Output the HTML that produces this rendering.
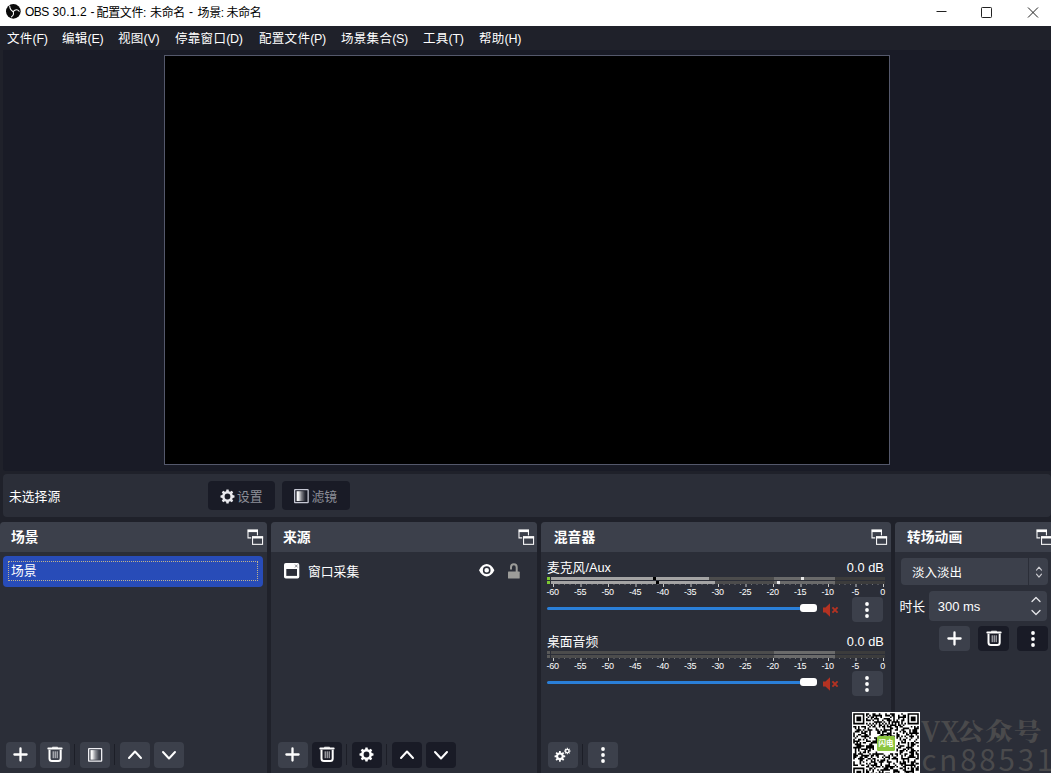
<!DOCTYPE html>
<html lang="zh-CN">
<head>
<meta charset="utf-8">
<title>OBS 30.1.2 - 配置文件: 未命名 - 场景: 未命名</title>
<style>
*{box-sizing:border-box;margin:0;padding:0}
html,body{width:1051px;height:773px;overflow:hidden;background:#1f212a}
body{position:relative;font-family:"Liberation Sans","Noto Sans CJK SC",sans-serif;font-size:12px;color:#fefefe;-webkit-font-smoothing:antialiased}
.abs{position:absolute}
#titlebar{left:0;top:0;width:1051px;height:26px;background:#fff;color:#000}
#titlebar .ttl{top:3.5px;font-size:12px;line-height:18px;white-space:nowrap;letter-spacing:-0.35px}
#menubar{left:0;top:26px;width:1051px;height:24px;background:#1f212a}
#menubar span{position:absolute;top:4px;line-height:18px;font-size:12.5px;white-space:nowrap;letter-spacing:0.3px}
#menubar i{font-style:normal;letter-spacing:-0.3px}
#pvarea{left:3px;top:50px;width:1060px;height:421px;background:#191b26;border-radius:0 0 0 3px}
#preview{left:164px;top:55px;width:726px;height:410px;background:#000;border:1px solid #54586b}
#ctx{left:3px;top:474px;width:1048px;height:43px;background:#2b2e38;border-radius:4px}
.dock{background:#2b2e38;border-radius:4px 4px 0 0;top:522px;height:260px}
.dock .hd{position:absolute;left:0;top:0;right:0;height:30px;background:#3c404b;border-radius:4px 4px 0 0}
.dock .hd b{position:absolute;left:11px;top:6.700px;font-size:13.800px;line-height:18px;font-weight:700;white-space:nowrap}
.btn{position:absolute;background:#3c404b;border-radius:4px}
.btn.dk{background:#191b26}
.dim{color:#8d8f98;font-size:12.800px;line-height:18px;white-space:nowrap}
.tk{position:absolute;font-size:9px;line-height:10px;color:#fefefe;white-space:nowrap;letter-spacing:-0.2px}
svg{position:absolute;display:block;overflow:visible}
</style>
</head>
<body>

<!-- window title bar -->
<div id="titlebar" class="abs">
  <svg style="left:6.300px;top:3.900px" width="14.700" height="14.700" viewBox="0 0 30 30">
    <circle cx="15" cy="15" r="15" fill="#0a0a0a"/>
    <g fill="none" stroke="#fff" stroke-width="2.100" stroke-linecap="round">
      <path d="M7.600 4.300c0.300 5.500 2.300 8.800 7 11.100"/>
      <path d="M14.600 15.400c4.400-4.800 9.300-5 12.200-0.500"/>
      <path d="M14.600 15.400c1.800 5 0.300 8.600-3.600 11"/>
    </g>
  </svg>
  <span class="abs ttl" style="left:25px;top:2.500px;letter-spacing:0.200px"><span style="letter-spacing:-0.500px">OBS</span> 30.1.2 -</span><span class="abs ttl" style="left:96.500px">配置文件:</span><span class="abs ttl" style="left:150px">未命名</span><span class="abs ttl" style="left:189px;top:2.500px">-</span><span class="abs ttl" style="left:197.500px">场景:</span><span class="abs ttl" style="left:226.500px">未命名</span>
  <svg style="left:936px;top:6px" width="110" height="12" viewBox="0 0 110 12" fill="none" stroke="#222" stroke-width="1">
    <path d="M0.500 5.500H10.500"/>
    <rect x="45.500" y="1.500" width="10" height="10" rx="0.800"/>
    <path d="M92 1.500l10 10M102 1.500l-10 10"/>
  </svg>
</div>

<!-- menu bar -->
<div id="menubar" class="abs">
  <span style="left:7px">文件<i>(F)</i></span>
  <span style="left:62px">编辑<i>(E)</i></span>
  <span style="left:118px">视图<i>(V)</i></span>
  <span style="left:175px">停靠窗口<i>(D)</i></span>
  <span style="left:259px">配置文件<i>(P)</i></span>
  <span style="left:341px">场景集合<i>(S)</i></span>
  <span style="left:423px">工具<i>(T)</i></span>
  <span style="left:479px">帮助<i>(H)</i></span>
</div>

<!-- preview -->
<div id="pvarea" class="abs"></div>
<div id="preview" class="abs"></div>

<!-- context bar -->
<div id="ctx" class="abs">
  <span class="abs" style="left:6px;top:14px;line-height:18px;font-size:12.800px;white-space:nowrap">未选择源</span>
  <div class="btn dk" style="left:205px;top:7px;width:67px;height:29px">
    <svg style="left:11.600px;top:7.600px" width="15" height="15" viewBox="0 0 15 15"><path fill="#e9e9ee" fill-rule="evenodd" d="M6.10 2.28L6.39 0.49L8.61 0.49L8.90 2.28L10.20 2.82L11.67 1.76L13.24 3.33L12.18 4.80L12.72 6.10L14.51 6.39L14.51 8.61L12.72 8.90L12.18 10.20L13.24 11.67L11.67 13.24L10.20 12.18L8.90 12.72L8.61 14.51L6.39 14.51L6.10 12.72L4.80 12.18L3.33 13.24L1.76 11.67L2.82 10.20L2.28 8.90L0.49 8.61L0.49 6.39L2.28 6.10L2.82 4.80L1.76 3.33L3.33 1.76L4.80 2.82zM4.60 7.50a2.90 2.90 0 1 0 5.80 0a2.90 2.90 0 1 0 -5.80 0z"/></svg>
    <span class="abs dim" style="left:29px;top:7px">设置</span>
  </div>
  <div class="btn dk" style="left:279px;top:7px;width:68px;height:29px">
    <svg style="left:12.200px;top:7.900px" width="14.800" height="14.300" viewBox="0 0 14.800 14.300"><defs><linearGradient id="fg1" x1="0" x2="1" y1="0" y2="0"><stop offset="0" stop-color="#fff"/><stop offset="0.180" stop-color="#fff" stop-opacity="0.950"/><stop offset="0.500" stop-color="#fff" stop-opacity="0.450"/><stop offset="0.850" stop-color="#fff" stop-opacity="0.080"/><stop offset="1" stop-color="#fff" stop-opacity="0"/></linearGradient></defs><rect x="0.650" y="0.650" width="13.500" height="13" rx="0.500" fill="none" stroke="#c6c8d4" stroke-width="1.300"/><rect x="2.600" y="2.200" width="9.700" height="9.900" fill="url(#fg1)"/></svg>
    <span class="abs dim" style="left:29.500px;top:7px">滤镜</span>
  </div>
</div>

<!-- docks -->
<div class="dock abs" id="d-scenes" style="left:0;width:267px"><div class="hd"><b>场景</b><svg style="left:247px;top:7px" width="17" height="17" viewBox="0 0 17 17" fill="none" stroke="#f4f4f6" stroke-width="1.100"><rect x="0.400" y="0.400" width="10.600" height="2.700" fill="#fefefe" stroke="none"/><path d="M1 3v5.900h4M10.450 3v4"/><rect x="4.200" y="6.400" width="12.700" height="10.300" fill="#3c404b" stroke="none"/><rect x="5.550" y="8" width="10" height="7.350" fill="none"/><rect x="5" y="7.200" width="11.100" height="2.300" fill="#fefefe" stroke="none"/></svg></div>
  <div class="abs" style="left:3px;top:33.500px;width:260px;height:31.500px;background:#284cb8;border-radius:4px">
    <div class="abs" style="left:5px;top:5.500px;width:250px;height:20px;border:1px dotted rgba(232,205,130,0.800)"></div>
    <span class="abs" style="left:8px;top:6.800px;line-height:18px;font-size:12.800px">场景</span>
  </div>
  <div class="btn" style="left:6px;top:220px;width:30px;height:26px"><svg style="left:6.7px;top:5.300px" width="15" height="15" viewBox="0 0 15 15" stroke="#fefefe" stroke-width="2.300" stroke-linecap="round"><path d="M7.500 1.400v12.200M1.400 7.500h12.200"/></svg></div><div class="btn" style="left:40px;top:220px;width:30px;height:26px"><svg style="left:7.3px;top:4.200px" width="16" height="17" viewBox="0 0 16 17" fill="none" stroke="#fefefe"><path d="M1.300 2.450h13.400" stroke-width="1.900" stroke-linecap="round"/><path d="M5 1.700c0-0.700 0.300-1 1-1h4c0.700 0 1 0.300 1 1z" fill="#fefefe" stroke="none"/><path d="M2.500 3.800v8.800c0 1.600 0.900 2.500 2.500 2.500h6.200c1.600 0 2.500-0.900 2.500-2.500V3.800" stroke-width="2"/><path d="M6.200 5.300v6.900M8.200 5.300v6.900M10.200 5.300v6.900" stroke-width="0.900" stroke="#e2e2e6"/></svg></div><div class="abs" style="left:74px;top:222px;width:1px;height:21px;background:#1c1e27"></div><div class="btn" style="left:80px;top:220px;width:30px;height:26px"><svg style="left:7.700px;top:5.800px" width="14.300" height="13.800" viewBox="0 0 14.300 13.800"><defs><linearGradient id="fg2" x1="0" x2="1" y1="0" y2="0"><stop offset="0" stop-color="#fff"/><stop offset="0.180" stop-color="#fff" stop-opacity="0.950"/><stop offset="0.500" stop-color="#fff" stop-opacity="0.450"/><stop offset="0.850" stop-color="#fff" stop-opacity="0.080"/><stop offset="1" stop-color="#fff" stop-opacity="0"/></linearGradient></defs><rect x="0.650" y="0.650" width="13" height="12.500" rx="0.500" fill="none" stroke="#eeeef2" stroke-width="1.300"/><rect x="2.500" y="2.100" width="9.300" height="9.600" fill="url(#fg2)"/></svg></div><div class="abs" style="left:114px;top:222px;width:1px;height:21px;background:#1c1e27"></div><div class="btn" style="left:120px;top:220px;width:30px;height:26px"><svg style="left:8.100px;top:8.300px" width="14" height="9" viewBox="0 0 14 9" fill="none" stroke="#fefefe" stroke-width="2" stroke-linecap="round" stroke-linejoin="round"><path d="M1 8l6-6.500L13 8"/></svg></div><div class="btn" style="left:154px;top:220px;width:30px;height:26px"><svg style="left:8.100px;top:8.700px" width="14" height="9" viewBox="0 0 14 9" fill="none" stroke="#fefefe" stroke-width="2" stroke-linecap="round" stroke-linejoin="round"><path d="M1 1l6 6.500L13 1"/></svg></div></div>
<div class="dock abs" id="d-sources" style="left:271px;width:266px"><div class="hd"><b style="left:12px">来源</b><svg style="left:246.500px;top:7px" width="17" height="17" viewBox="0 0 17 17" fill="none" stroke="#f4f4f6" stroke-width="1.100"><rect x="0.400" y="0.400" width="10.600" height="2.700" fill="#fefefe" stroke="none"/><path d="M1 3v5.900h4M10.450 3v4"/><rect x="4.200" y="6.400" width="12.700" height="10.300" fill="#3c404b" stroke="none"/><rect x="5.550" y="8" width="10" height="7.350" fill="none"/><rect x="5" y="7.200" width="11.100" height="2.300" fill="#fefefe" stroke="none"/></svg></div>
  <svg style="left:13px;top:40.800px" width="15.300" height="15.500" viewBox="0 0 15.300 15.500"><rect x="0" y="0" width="15.300" height="15.500" rx="1.800" fill="#fefefe"/><rect x="2.300" y="6" width="10.700" height="6.900" fill="#2b2e38"/><path d="M11 1.600l2.600 2.800M13.600 1.600l-2.600 2.800" stroke="#6a6c74" stroke-width="0.800" fill="none"/></svg>
  <span class="abs" style="left:37px;top:40.500px;line-height:18px;font-size:12.800px;white-space:nowrap">窗口采集</span>
  <svg style="left:207.600px;top:42.400px" width="15.400" height="12.400" viewBox="0 0 15.400 12.400"><path fill="#fefefe" fill-rule="evenodd" d="M0 6.200C2 2.200 4.800 0 7.700 0S13.400 2.200 15.400 6.200C13.400 10.200 10.600 12.400 7.700 12.400S2 10.200 0 6.200zM3.850 6.200a3.850 3.850 0 1 0 7.700 0a3.850 3.850 0 1 0 -7.700 0zM5.400 6.200a2.300 2.300 0 1 0 4.600 0a2.300 2.300 0 1 0 -4.600 0z"/></svg>
  <svg style="left:237px;top:40.500px" width="12" height="16" viewBox="0 0 12 16"><path fill="none" stroke="#9c9c99" stroke-width="2" d="M3 6.400V4.150a2.850 2.850 0 0 1 5.700 0V9"/><rect x="0" y="8.600" width="11.700" height="7" rx="0.600" fill="#9c9c99"/></svg>
  <div class="btn" style="left:7px;top:220px;width:30px;height:26px"><svg style="left:6.7px;top:5.300px" width="15" height="15" viewBox="0 0 15 15" stroke="#fefefe" stroke-width="2.300" stroke-linecap="round"><path d="M7.500 1.400v12.200M1.400 7.500h12.200"/></svg></div><div class="btn dk" style="left:41px;top:220px;width:30px;height:26px"><svg style="left:7.3px;top:4.200px" width="16" height="17" viewBox="0 0 16 17" fill="none" stroke="#fefefe"><path d="M1.300 2.450h13.400" stroke-width="1.900" stroke-linecap="round"/><path d="M5 1.700c0-0.700 0.300-1 1-1h4c0.700 0 1 0.300 1 1z" fill="#fefefe" stroke="none"/><path d="M2.500 3.800v8.800c0 1.600 0.900 2.500 2.500 2.500h6.200c1.600 0 2.500-0.900 2.500-2.500V3.800" stroke-width="2"/><path d="M6.200 5.300v6.900M8.200 5.300v6.900M10.200 5.300v6.900" stroke-width="0.900" stroke="#e2e2e6"/></svg></div><div class="abs" style="left:75px;top:222px;width:1px;height:21px;background:#1c1e27"></div><div class="btn dk" style="left:81px;top:220px;width:30px;height:26px"><svg style="left:7.400px;top:5.200px" width="15" height="15" viewBox="0 0 15 15"><path fill="#fefefe" fill-rule="evenodd" d="M6.10 2.28L6.39 0.49L8.61 0.49L8.90 2.28L10.20 2.82L11.67 1.76L13.24 3.33L12.18 4.80L12.72 6.10L14.51 6.39L14.51 8.61L12.72 8.90L12.18 10.20L13.24 11.67L11.67 13.24L10.20 12.18L8.90 12.72L8.61 14.51L6.39 14.51L6.10 12.72L4.80 12.18L3.33 13.24L1.76 11.67L2.82 10.20L2.28 8.90L0.49 8.61L0.49 6.39L2.28 6.10L2.82 4.80L1.76 3.33L3.33 1.76L4.80 2.82zM4.60 7.50a2.90 2.90 0 1 0 5.80 0a2.90 2.90 0 1 0 -5.80 0z"/></svg></div><div class="abs" style="left:115px;top:222px;width:1px;height:21px;background:#1c1e27"></div><div class="btn dk" style="left:121px;top:220px;width:30px;height:26px"><svg style="left:8.100px;top:8.300px" width="14" height="9" viewBox="0 0 14 9" fill="none" stroke="#fefefe" stroke-width="2" stroke-linecap="round" stroke-linejoin="round"><path d="M1 8l6-6.500L13 8"/></svg></div><div class="btn dk" style="left:155px;top:220px;width:30px;height:26px"><svg style="left:8.100px;top:8.700px" width="14" height="9" viewBox="0 0 14 9" fill="none" stroke="#fefefe" stroke-width="2" stroke-linecap="round" stroke-linejoin="round"><path d="M1 1l6 6.500L13 1"/></svg></div></div>
<div class="dock abs" id="d-mixer" style="left:541px;width:350px"><div class="hd"><b style="left:12.800px">混音器</b><svg style="left:330px;top:7px" width="17" height="17" viewBox="0 0 17 17" fill="none" stroke="#f4f4f6" stroke-width="1.100"><rect x="0.400" y="0.400" width="10.600" height="2.700" fill="#fefefe" stroke="none"/><path d="M1 3v5.900h4M10.450 3v4"/><rect x="4.200" y="6.400" width="12.700" height="10.300" fill="#3c404b" stroke="none"/><rect x="5.550" y="8" width="10" height="7.350" fill="none"/><rect x="5" y="7.200" width="11.100" height="2.300" fill="#fefefe" stroke="none"/></svg></div><span class="abs" style="left:6px;top:36.800px;line-height:18px;font-size:12.800px;white-space:nowrap">麦克风/Aux</span><span class="abs" style="right:7.200px;top:36.800px;line-height:18px;font-size:12.800px;white-space:nowrap">0.0 dB</span><div class="abs" style="left:6px;top:55px;width:3px;height:3px;background:#7cc832"></div><div class="abs" style="left:6px;top:59px;width:3px;height:3px;background:#7cc832"></div><div class="abs" style="left:10px;top:55px;width:223px;height:3px;background:#4c4c4c"></div><div class="abs" style="left:233px;top:55px;width:61px;height:3px;background:#6a6a6a"></div><div class="abs" style="left:294px;top:55px;width:50px;height:3px;background:#3c3c3c"></div><div class="abs" style="left:10px;top:59px;width:223px;height:3px;background:#4c4c4c"></div><div class="abs" style="left:233px;top:59px;width:61px;height:3px;background:#6a6a6a"></div><div class="abs" style="left:294px;top:59px;width:50px;height:3px;background:#3c3c3c"></div><div class="abs" style="left:10px;top:55px;width:158px;height:3px;background:#a4a4a4"></div><div class="abs" style="left:10px;top:59px;width:164px;height:3px;background:#a4a4a4"></div><div class="abs" style="left:112px;top:55px;width:3px;height:3px;background:#000"></div><div class="abs" style="left:115px;top:59px;width:3px;height:3px;background:#000"></div><div class="abs" style="left:260px;top:55px;width:3px;height:3px;background:#e6e6e6"></div><div class="abs" style="left:236px;top:59px;width:3px;height:3px;background:#e6e6e6"></div><svg style="left:0;top:62px" width="350" height="4" viewBox="0 0 350 4" fill="#c8c8c8"><rect x="12.0" y="0" width="1" height="3"/><rect x="17.5" y="0" width="1" height="1" opacity="0.450"/><rect x="23.0" y="0" width="1" height="1" opacity="0.450"/><rect x="28.5" y="0" width="1" height="1" opacity="0.450"/><rect x="34.0" y="0" width="1" height="1" opacity="0.450"/><rect x="39.5" y="0" width="1" height="3"/><rect x="45.0" y="0" width="1" height="1" opacity="0.450"/><rect x="50.5" y="0" width="1" height="1" opacity="0.450"/><rect x="56.0" y="0" width="1" height="1" opacity="0.450"/><rect x="61.5" y="0" width="1" height="1" opacity="0.450"/><rect x="67.0" y="0" width="1" height="3"/><rect x="72.5" y="0" width="1" height="1" opacity="0.450"/><rect x="78.0" y="0" width="1" height="1" opacity="0.450"/><rect x="83.5" y="0" width="1" height="1" opacity="0.450"/><rect x="89.0" y="0" width="1" height="1" opacity="0.450"/><rect x="94.5" y="0" width="1" height="3"/><rect x="100.0" y="0" width="1" height="1" opacity="0.450"/><rect x="105.5" y="0" width="1" height="1" opacity="0.450"/><rect x="111.0" y="0" width="1" height="1" opacity="0.450"/><rect x="116.5" y="0" width="1" height="1" opacity="0.450"/><rect x="122.0" y="0" width="1" height="3"/><rect x="127.5" y="0" width="1" height="1" opacity="0.450"/><rect x="133.0" y="0" width="1" height="1" opacity="0.450"/><rect x="138.5" y="0" width="1" height="1" opacity="0.450"/><rect x="144.0" y="0" width="1" height="1" opacity="0.450"/><rect x="149.5" y="0" width="1" height="3"/><rect x="155.0" y="0" width="1" height="1" opacity="0.450"/><rect x="160.5" y="0" width="1" height="1" opacity="0.450"/><rect x="166.0" y="0" width="1" height="1" opacity="0.450"/><rect x="171.5" y="0" width="1" height="1" opacity="0.450"/><rect x="177.0" y="0" width="1" height="3"/><rect x="182.5" y="0" width="1" height="1" opacity="0.450"/><rect x="188.0" y="0" width="1" height="1" opacity="0.450"/><rect x="193.5" y="0" width="1" height="1" opacity="0.450"/><rect x="199.0" y="0" width="1" height="1" opacity="0.450"/><rect x="204.5" y="0" width="1" height="3"/><rect x="210.0" y="0" width="1" height="1" opacity="0.450"/><rect x="215.5" y="0" width="1" height="1" opacity="0.450"/><rect x="221.0" y="0" width="1" height="1" opacity="0.450"/><rect x="226.5" y="0" width="1" height="1" opacity="0.450"/><rect x="232.0" y="0" width="1" height="3"/><rect x="237.5" y="0" width="1" height="1" opacity="0.450"/><rect x="243.0" y="0" width="1" height="1" opacity="0.450"/><rect x="248.5" y="0" width="1" height="1" opacity="0.450"/><rect x="254.0" y="0" width="1" height="1" opacity="0.450"/><rect x="259.5" y="0" width="1" height="3"/><rect x="265.0" y="0" width="1" height="1" opacity="0.450"/><rect x="270.5" y="0" width="1" height="1" opacity="0.450"/><rect x="276.0" y="0" width="1" height="1" opacity="0.450"/><rect x="281.5" y="0" width="1" height="1" opacity="0.450"/><rect x="287.0" y="0" width="1" height="3"/><rect x="292.5" y="0" width="1" height="1" opacity="0.450"/><rect x="298.0" y="0" width="1" height="1" opacity="0.450"/><rect x="303.5" y="0" width="1" height="1" opacity="0.450"/><rect x="309.0" y="0" width="1" height="1" opacity="0.450"/><rect x="314.5" y="0" width="1" height="3"/><rect x="320.0" y="0" width="1" height="1" opacity="0.450"/><rect x="325.5" y="0" width="1" height="1" opacity="0.450"/><rect x="331.0" y="0" width="1" height="1" opacity="0.450"/><rect x="336.5" y="0" width="1" height="1" opacity="0.450"/><rect x="342.0" y="0" width="1" height="3"/></svg><span class="tk" style="left:-3.3px;top:64.800px;width:30px;text-align:center">-60</span><span class="tk" style="left:24.2px;top:64.800px;width:30px;text-align:center">-55</span><span class="tk" style="left:51.7px;top:64.800px;width:30px;text-align:center">-50</span><span class="tk" style="left:79.2px;top:64.800px;width:30px;text-align:center">-45</span><span class="tk" style="left:106.7px;top:64.800px;width:30px;text-align:center">-40</span><span class="tk" style="left:134.2px;top:64.800px;width:30px;text-align:center">-35</span><span class="tk" style="left:161.7px;top:64.800px;width:30px;text-align:center">-30</span><span class="tk" style="left:189.2px;top:64.800px;width:30px;text-align:center">-25</span><span class="tk" style="left:216.7px;top:64.800px;width:30px;text-align:center">-20</span><span class="tk" style="left:244.2px;top:64.800px;width:30px;text-align:center">-15</span><span class="tk" style="left:271.7px;top:64.800px;width:30px;text-align:center">-10</span><span class="tk" style="left:299.2px;top:64.800px;width:30px;text-align:center">-5</span><span class="tk" style="left:332.0px;top:64.800px;width:12px;text-align:right">0</span><div class="abs" style="left:6px;top:84.6px;width:262px;height:3.700px;border-radius:2px;background:#2a7fd8"></div><div class="abs" style="left:258.600px;top:82.1px;width:17.400px;height:8.400px;border-radius:3px;background:#fefefe"></div><svg style="left:282px;top:81px" width="16" height="14" viewBox="0 0 16 14"><path fill="#b43222" d="M0 4.500h2.500L7 0.300v13.400L2.500 9.500H0z"/><path d="M9.400 4.400l5.200 5.200M14.600 4.400l-5.200 5.200" stroke="#b43222" stroke-width="1.900" fill="none"/></svg><div class="btn" style="left:311px;top:75px;width:31px;height:25px"><svg style="left:13.300px;top:5px" width="4" height="16" viewBox="0 0 4 16" fill="#fefefe"><circle cx="2" cy="2" r="1.900"/><circle cx="2" cy="8" r="1.900"/><circle cx="2" cy="14" r="1.900"/></svg></div><span class="abs" style="left:6px;top:110.800px;line-height:18px;font-size:12.800px;white-space:nowrap">桌面音频</span><span class="abs" style="right:7.200px;top:110.800px;line-height:18px;font-size:12.800px;white-space:nowrap">0.0 dB</span><div class="abs" style="left:6px;top:129px;width:3px;height:3px;background:#5a5a5a"></div><div class="abs" style="left:6px;top:133px;width:3px;height:3px;background:#5a5a5a"></div><div class="abs" style="left:10px;top:129px;width:223px;height:3px;background:#4c4c4c"></div><div class="abs" style="left:233px;top:129px;width:61px;height:3px;background:#6a6a6a"></div><div class="abs" style="left:294px;top:129px;width:50px;height:3px;background:#3c3c3c"></div><div class="abs" style="left:10px;top:133px;width:223px;height:3px;background:#4c4c4c"></div><div class="abs" style="left:233px;top:133px;width:61px;height:3px;background:#6a6a6a"></div><div class="abs" style="left:294px;top:133px;width:50px;height:3px;background:#3c3c3c"></div><svg style="left:0;top:136px" width="350" height="4" viewBox="0 0 350 4" fill="#c8c8c8"><rect x="12.0" y="0" width="1" height="3"/><rect x="17.5" y="0" width="1" height="1" opacity="0.450"/><rect x="23.0" y="0" width="1" height="1" opacity="0.450"/><rect x="28.5" y="0" width="1" height="1" opacity="0.450"/><rect x="34.0" y="0" width="1" height="1" opacity="0.450"/><rect x="39.5" y="0" width="1" height="3"/><rect x="45.0" y="0" width="1" height="1" opacity="0.450"/><rect x="50.5" y="0" width="1" height="1" opacity="0.450"/><rect x="56.0" y="0" width="1" height="1" opacity="0.450"/><rect x="61.5" y="0" width="1" height="1" opacity="0.450"/><rect x="67.0" y="0" width="1" height="3"/><rect x="72.5" y="0" width="1" height="1" opacity="0.450"/><rect x="78.0" y="0" width="1" height="1" opacity="0.450"/><rect x="83.5" y="0" width="1" height="1" opacity="0.450"/><rect x="89.0" y="0" width="1" height="1" opacity="0.450"/><rect x="94.5" y="0" width="1" height="3"/><rect x="100.0" y="0" width="1" height="1" opacity="0.450"/><rect x="105.5" y="0" width="1" height="1" opacity="0.450"/><rect x="111.0" y="0" width="1" height="1" opacity="0.450"/><rect x="116.5" y="0" width="1" height="1" opacity="0.450"/><rect x="122.0" y="0" width="1" height="3"/><rect x="127.5" y="0" width="1" height="1" opacity="0.450"/><rect x="133.0" y="0" width="1" height="1" opacity="0.450"/><rect x="138.5" y="0" width="1" height="1" opacity="0.450"/><rect x="144.0" y="0" width="1" height="1" opacity="0.450"/><rect x="149.5" y="0" width="1" height="3"/><rect x="155.0" y="0" width="1" height="1" opacity="0.450"/><rect x="160.5" y="0" width="1" height="1" opacity="0.450"/><rect x="166.0" y="0" width="1" height="1" opacity="0.450"/><rect x="171.5" y="0" width="1" height="1" opacity="0.450"/><rect x="177.0" y="0" width="1" height="3"/><rect x="182.5" y="0" width="1" height="1" opacity="0.450"/><rect x="188.0" y="0" width="1" height="1" opacity="0.450"/><rect x="193.5" y="0" width="1" height="1" opacity="0.450"/><rect x="199.0" y="0" width="1" height="1" opacity="0.450"/><rect x="204.5" y="0" width="1" height="3"/><rect x="210.0" y="0" width="1" height="1" opacity="0.450"/><rect x="215.5" y="0" width="1" height="1" opacity="0.450"/><rect x="221.0" y="0" width="1" height="1" opacity="0.450"/><rect x="226.5" y="0" width="1" height="1" opacity="0.450"/><rect x="232.0" y="0" width="1" height="3"/><rect x="237.5" y="0" width="1" height="1" opacity="0.450"/><rect x="243.0" y="0" width="1" height="1" opacity="0.450"/><rect x="248.5" y="0" width="1" height="1" opacity="0.450"/><rect x="254.0" y="0" width="1" height="1" opacity="0.450"/><rect x="259.5" y="0" width="1" height="3"/><rect x="265.0" y="0" width="1" height="1" opacity="0.450"/><rect x="270.5" y="0" width="1" height="1" opacity="0.450"/><rect x="276.0" y="0" width="1" height="1" opacity="0.450"/><rect x="281.5" y="0" width="1" height="1" opacity="0.450"/><rect x="287.0" y="0" width="1" height="3"/><rect x="292.5" y="0" width="1" height="1" opacity="0.450"/><rect x="298.0" y="0" width="1" height="1" opacity="0.450"/><rect x="303.5" y="0" width="1" height="1" opacity="0.450"/><rect x="309.0" y="0" width="1" height="1" opacity="0.450"/><rect x="314.5" y="0" width="1" height="3"/><rect x="320.0" y="0" width="1" height="1" opacity="0.450"/><rect x="325.5" y="0" width="1" height="1" opacity="0.450"/><rect x="331.0" y="0" width="1" height="1" opacity="0.450"/><rect x="336.5" y="0" width="1" height="1" opacity="0.450"/><rect x="342.0" y="0" width="1" height="3"/></svg><span class="tk" style="left:-3.3px;top:138.800px;width:30px;text-align:center">-60</span><span class="tk" style="left:24.2px;top:138.800px;width:30px;text-align:center">-55</span><span class="tk" style="left:51.7px;top:138.800px;width:30px;text-align:center">-50</span><span class="tk" style="left:79.2px;top:138.800px;width:30px;text-align:center">-45</span><span class="tk" style="left:106.7px;top:138.800px;width:30px;text-align:center">-40</span><span class="tk" style="left:134.2px;top:138.800px;width:30px;text-align:center">-35</span><span class="tk" style="left:161.7px;top:138.800px;width:30px;text-align:center">-30</span><span class="tk" style="left:189.2px;top:138.800px;width:30px;text-align:center">-25</span><span class="tk" style="left:216.7px;top:138.800px;width:30px;text-align:center">-20</span><span class="tk" style="left:244.2px;top:138.800px;width:30px;text-align:center">-15</span><span class="tk" style="left:271.7px;top:138.800px;width:30px;text-align:center">-10</span><span class="tk" style="left:299.2px;top:138.800px;width:30px;text-align:center">-5</span><span class="tk" style="left:332.0px;top:138.800px;width:12px;text-align:right">0</span><div class="abs" style="left:6px;top:158.6px;width:262px;height:3.700px;border-radius:2px;background:#2a7fd8"></div><div class="abs" style="left:258.600px;top:156.1px;width:17.400px;height:8.400px;border-radius:3px;background:#fefefe"></div><svg style="left:282px;top:155px" width="16" height="14" viewBox="0 0 16 14"><path fill="#b43222" d="M0 4.500h2.500L7 0.300v13.400L2.500 9.500H0z"/><path d="M9.400 4.400l5.200 5.200M14.600 4.400l-5.200 5.200" stroke="#b43222" stroke-width="1.900" fill="none"/></svg><div class="btn" style="left:311px;top:149px;width:31px;height:25px"><svg style="left:13.300px;top:5px" width="4" height="16" viewBox="0 0 4 16" fill="#fefefe"><circle cx="2" cy="2" r="1.900"/><circle cx="2" cy="8" r="1.900"/><circle cx="2" cy="14" r="1.900"/></svg></div><div class="btn" style="left:7px;top:220px;width:30px;height:26px"><svg style="left:6px;top:5px" width="18" height="16" viewBox="0 0 18 16"><path fill="#fefefe" fill-rule="evenodd" d="M4.96 5.52L5.06 3.97L6.74 3.97L6.84 5.52L7.91 5.96L9.07 4.93L10.27 6.13L9.24 7.29L9.68 8.36L11.23 8.46L11.23 10.14L9.68 10.24L9.24 11.31L10.27 12.47L9.07 13.67L7.91 12.64L6.84 13.08L6.74 14.63L5.06 14.63L4.96 13.08L3.89 12.64L2.73 13.67L1.53 12.47L2.56 11.31L2.12 10.24L0.57 10.14L0.57 8.46L2.12 8.36L2.56 7.29L1.53 6.13L2.73 4.93L3.89 5.96zM4.10 9.30a1.80 1.80 0 1 0 3.60 0a1.80 1.80 0 1 0 -3.60 0z"/><path fill="#fefefe" fill-rule="evenodd" d="M12.74 1.87L12.78 0.84L13.82 0.84L13.86 1.87L14.48 2.13L15.24 1.43L15.97 2.16L15.27 2.92L15.53 3.54L16.56 3.58L16.56 4.62L15.53 4.66L15.27 5.28L15.97 6.04L15.24 6.77L14.48 6.07L13.86 6.33L13.82 7.36L12.78 7.36L12.74 6.33L12.12 6.07L11.36 6.77L10.63 6.04L11.33 5.28L11.07 4.66L10.04 4.62L10.04 3.58L11.07 3.54L11.33 2.92L10.63 2.16L11.36 1.43L12.12 2.13zM12.20 4.10a1.10 1.10 0 1 0 2.20 0a1.10 1.10 0 1 0 -2.20 0z"/></svg></div><div class="abs" style="left:41px;top:222px;width:1px;height:21px;background:#1c1e27"></div><div class="btn" style="left:47px;top:220px;width:30px;height:26px"><svg style="left:13px;top:5px" width="4" height="16" viewBox="0 0 4 16" fill="#fefefe"><circle cx="2" cy="2" r="1.900"/><circle cx="2" cy="8" r="1.900"/><circle cx="2" cy="14" r="1.900"/></svg></div></div>
<div class="dock abs" id="d-trans" style="left:895px;width:170px"><div class="hd"><b style="left:12px">转场动画</b><svg style="left:141px;top:7px" width="17" height="17" viewBox="0 0 17 17" fill="none" stroke="#f4f4f6" stroke-width="1.100"><rect x="0.400" y="0.400" width="10.600" height="2.700" fill="#fefefe" stroke="none"/><path d="M1 3v5.900h4M10.450 3v4"/><rect x="4.200" y="6.400" width="12.700" height="10.300" fill="#3c404b" stroke="none"/><rect x="5.550" y="8" width="10" height="7.350" fill="none"/><rect x="5" y="7.200" width="11.100" height="2.300" fill="#fefefe" stroke="none"/></svg></div><div class="btn" style="left:6px;top:36px;width:147px;height:27px"><span class="abs" style="left:11px;top:6.300px;line-height:18px;font-size:12.500px;white-space:nowrap">淡入淡出</span><div class="abs" style="left:126.500px;top:0;width:1.500px;height:27px;background:#2b2e38"></div><svg style="left:134.700px;top:7.700px" width="6" height="12" viewBox="0 0 6 12" fill="none" stroke="#cfcfd4" stroke-width="1.100" stroke-linecap="round" stroke-linejoin="round"><path d="M0.500 4.100L3 1.100l2.500 3M0.500 8.200L3 11.200l2.500-3"/></svg></div><span class="abs" style="left:4.500px;top:76px;line-height:18px;font-size:12.800px;white-space:nowrap">时长</span><div class="btn" style="left:34px;top:69px;width:118px;height:30px"><span class="abs" style="left:8.700px;top:6.500px;line-height:18px;font-size:13px;white-space:nowrap">300 ms</span><svg style="left:102px;top:5px" width="10" height="20" viewBox="0 0 10 20" fill="none" stroke="#e6e6ea" stroke-width="1.300" stroke-linecap="round" stroke-linejoin="round"><path d="M1 5.500l4-4 4 4M1 14.500l4 4 4-4"/></svg></div><div class="btn" style="left:44px;top:104px;width:31px;height:25px"><svg style="left:7.7px;top:5.300px" width="15" height="15" viewBox="0 0 15 15" stroke="#fefefe" stroke-width="2.300" stroke-linecap="round"><path d="M7.500 1.400v12.200M1.400 7.500h12.200"/></svg></div><div class="btn dk" style="left:83px;top:104px;width:31px;height:25px"><svg style="left:8.3px;top:4.200px" width="16" height="17" viewBox="0 0 16 17" fill="none" stroke="#fefefe"><path d="M1.300 2.450h13.400" stroke-width="1.900" stroke-linecap="round"/><path d="M5 1.700c0-0.700 0.300-1 1-1h4c0.700 0 1 0.300 1 1z" fill="#fefefe" stroke="none"/><path d="M2.500 3.800v8.800c0 1.600 0.900 2.500 2.500 2.500h6.200c1.600 0 2.500-0.900 2.500-2.500V3.800" stroke-width="2"/><path d="M6.200 5.300v6.900M8.200 5.300v6.900M10.200 5.300v6.900" stroke-width="0.900" stroke="#e2e2e6"/></svg></div><div class="btn dk" style="left:122px;top:104px;width:31px;height:25px"><svg style="left:14px;top:5px" width="4" height="16" viewBox="0 0 4 16" fill="#fefefe"><circle cx="2" cy="2" r="1.900"/><circle cx="2" cy="8" r="1.900"/><circle cx="2" cy="14" r="1.900"/></svg></div></div>

<!-- watermark overlay -->
<svg class="abs" style="left:852px;top:712px" width="68" height="68" viewBox="0 0 68 68"><rect width="68" height="68" fill="#fff"/><g transform="translate(1.200,1.200) scale(1.600)"><path fill="#000" d="M0 0h7v1h-7zM8 0h2v1h-2zM12 0h2v1h-2zM16 0h1v1h-1zM20 0h1v1h-1zM23 0h3v1h-3zM30 0h1v1h-1zM34 0h7v1h-7zM0 1h1v1h-1zM6 1h1v1h-1zM8 1h1v1h-1zM10 1h1v1h-1zM12 1h6v1h-6zM20 1h3v1h-3zM24 1h2v1h-2zM28 1h1v1h-1zM31 1h2v1h-2zM34 1h1v1h-1zM40 1h1v1h-1zM0 2h1v1h-1zM2 2h3v1h-3zM6 2h1v1h-1zM9 2h1v1h-1zM11 2h2v1h-2zM14 2h1v1h-1zM17 2h1v1h-1zM23 2h1v1h-1zM25 2h1v1h-1zM28 2h5v1h-5zM34 2h1v1h-1zM36 2h3v1h-3zM40 2h1v1h-1zM0 3h1v1h-1zM2 3h3v1h-3zM6 3h1v1h-1zM8 3h1v1h-1zM11 3h1v1h-1zM13 3h3v1h-3zM19 3h4v1h-4zM25 3h1v1h-1zM28 3h1v1h-1zM31 3h1v1h-1zM34 3h1v1h-1zM36 3h3v1h-3zM40 3h1v1h-1zM0 4h1v1h-1zM2 4h3v1h-3zM6 4h1v1h-1zM8 4h3v1h-3zM12 4h1v1h-1zM15 4h1v1h-1zM18 4h1v1h-1zM21 4h3v1h-3zM25 4h1v1h-1zM27 4h1v1h-1zM30 4h2v1h-2zM34 4h1v1h-1zM36 4h3v1h-3zM40 4h1v1h-1zM0 5h1v1h-1zM6 5h1v1h-1zM13 5h5v1h-5zM19 5h1v1h-1zM22 5h1v1h-1zM24 5h5v1h-5zM30 5h1v1h-1zM34 5h1v1h-1zM40 5h1v1h-1zM0 6h7v1h-7zM8 6h1v1h-1zM10 6h1v1h-1zM12 6h1v1h-1zM14 6h1v1h-1zM16 6h1v1h-1zM18 6h1v1h-1zM20 6h1v1h-1zM22 6h1v1h-1zM24 6h1v1h-1zM26 6h1v1h-1zM28 6h1v1h-1zM30 6h1v1h-1zM32 6h1v1h-1zM34 6h7v1h-7zM9 7h1v1h-1zM11 7h1v1h-1zM13 7h1v1h-1zM16 7h2v1h-2zM19 7h1v1h-1zM21 7h1v1h-1zM23 7h4v1h-4zM28 7h2v1h-2zM31 7h1v1h-1zM0 8h2v1h-2zM3 8h1v1h-1zM5 8h3v1h-3zM10 8h1v1h-1zM12 8h2v1h-2zM16 8h1v1h-1zM18 8h2v1h-2zM21 8h3v1h-3zM26 8h2v1h-2zM29 8h2v1h-2zM36 8h1v1h-1zM38 8h1v1h-1zM40 8h1v1h-1zM1 9h1v1h-1zM3 9h1v1h-1zM7 9h1v1h-1zM9 9h1v1h-1zM14 9h1v1h-1zM19 9h1v1h-1zM23 9h2v1h-2zM27 9h1v1h-1zM31 9h4v1h-4zM38 9h3v1h-3zM2 10h3v1h-3zM6 10h1v1h-1zM9 10h3v1h-3zM14 10h2v1h-2zM17 10h1v1h-1zM19 10h5v1h-5zM26 10h2v1h-2zM30 10h2v1h-2zM35 10h1v1h-1zM37 10h3v1h-3zM1 11h3v1h-3zM5 11h1v1h-1zM7 11h2v1h-2zM10 11h1v1h-1zM15 11h2v1h-2zM18 11h3v1h-3zM23 11h1v1h-1zM29 11h1v1h-1zM31 11h2v1h-2zM35 11h1v1h-1zM37 11h3v1h-3zM0 12h1v1h-1zM5 12h3v1h-3zM10 12h1v1h-1zM15 12h2v1h-2zM18 12h1v1h-1zM21 12h3v1h-3zM25 12h1v1h-1zM27 12h1v1h-1zM31 12h1v1h-1zM33 12h1v1h-1zM35 12h6v1h-6zM0 13h1v1h-1zM3 13h2v1h-2zM7 13h2v1h-2zM10 13h1v1h-1zM17 13h7v1h-7zM27 13h2v1h-2zM33 13h2v1h-2zM36 13h1v1h-1zM39 13h1v1h-1zM0 14h1v1h-1zM2 14h1v1h-1zM5 14h5v1h-5zM16 14h3v1h-3zM21 14h1v1h-1zM23 14h3v1h-3zM27 14h2v1h-2zM30 14h1v1h-1zM32 14h1v1h-1zM35 14h3v1h-3zM40 14h1v1h-1zM1 15h1v1h-1zM7 15h1v1h-1zM10 15h1v1h-1zM13 15h2v1h-2zM27 15h1v1h-1zM29 15h1v1h-1zM33 15h1v1h-1zM36 15h1v1h-1zM40 15h1v1h-1zM0 16h1v1h-1zM3 16h2v1h-2zM6 16h1v1h-1zM8 16h1v1h-1zM14 16h1v1h-1zM29 16h1v1h-1zM31 16h2v1h-2zM35 16h1v1h-1zM39 16h1v1h-1zM0 17h4v1h-4zM8 17h3v1h-3zM12 17h3v1h-3zM30 17h1v1h-1zM32 17h1v1h-1zM38 17h1v1h-1zM0 18h1v1h-1zM2 18h1v1h-1zM4 18h1v1h-1zM6 18h2v1h-2zM11 18h4v1h-4zM28 18h1v1h-1zM30 18h3v1h-3zM34 18h1v1h-1zM36 18h2v1h-2zM39 18h2v1h-2zM1 19h4v1h-4zM10 19h2v1h-2zM28 19h1v1h-1zM34 19h1v1h-1zM36 19h3v1h-3zM2 20h5v1h-5zM8 20h5v1h-5zM27 20h1v1h-1zM29 20h3v1h-3zM34 20h1v1h-1zM36 20h2v1h-2zM40 20h1v1h-1zM0 21h5v1h-5zM8 21h5v1h-5zM28 21h2v1h-2zM33 21h4v1h-4zM1 22h1v1h-1zM3 22h1v1h-1zM5 22h4v1h-4zM10 22h1v1h-1zM12 22h1v1h-1zM27 22h1v1h-1zM31 22h2v1h-2zM34 22h1v1h-1zM36 22h2v1h-2zM1 23h1v1h-1zM3 23h1v1h-1zM7 23h1v1h-1zM9 23h2v1h-2zM27 23h1v1h-1zM29 23h3v1h-3zM33 23h1v1h-1zM36 23h3v1h-3zM40 23h1v1h-1zM1 24h1v1h-1zM4 24h1v1h-1zM6 24h2v1h-2zM9 24h1v1h-1zM14 24h1v1h-1zM29 24h2v1h-2zM35 24h3v1h-3zM39 24h1v1h-1zM0 25h2v1h-2zM3 25h3v1h-3zM10 25h1v1h-1zM12 25h7v1h-7zM23 25h2v1h-2zM26 25h2v1h-2zM29 25h1v1h-1zM32 25h2v1h-2zM36 25h2v1h-2zM39 25h2v1h-2zM0 26h3v1h-3zM5 26h5v1h-5zM11 26h2v1h-2zM14 26h2v1h-2zM19 26h1v1h-1zM22 26h1v1h-1zM24 26h1v1h-1zM27 26h1v1h-1zM30 26h1v1h-1zM32 26h1v1h-1zM35 26h3v1h-3zM40 26h1v1h-1zM0 27h2v1h-2zM4 27h2v1h-2zM7 27h2v1h-2zM11 27h1v1h-1zM15 27h1v1h-1zM18 27h1v1h-1zM20 27h3v1h-3zM25 27h2v1h-2zM30 27h1v1h-1zM34 27h5v1h-5zM40 27h1v1h-1zM0 28h1v1h-1zM3 28h4v1h-4zM9 28h2v1h-2zM12 28h2v1h-2zM19 28h1v1h-1zM22 28h1v1h-1zM24 28h4v1h-4zM30 28h5v1h-5zM39 28h2v1h-2zM4 29h2v1h-2zM8 29h1v1h-1zM11 29h1v1h-1zM13 29h1v1h-1zM15 29h1v1h-1zM17 29h3v1h-3zM21 29h1v1h-1zM27 29h1v1h-1zM31 29h1v1h-1zM34 29h1v1h-1zM38 29h1v1h-1zM0 30h1v1h-1zM4 30h1v1h-1zM6 30h1v1h-1zM11 30h3v1h-3zM16 30h3v1h-3zM21 30h3v1h-3zM27 30h1v1h-1zM29 30h1v1h-1zM31 30h2v1h-2zM34 30h1v1h-1zM36 30h3v1h-3zM0 31h1v1h-1zM4 31h1v1h-1zM8 31h1v1h-1zM10 31h1v1h-1zM13 31h2v1h-2zM17 31h1v1h-1zM22 31h1v1h-1zM25 31h1v1h-1zM29 31h4v1h-4zM36 31h2v1h-2zM39 31h2v1h-2zM0 32h3v1h-3zM5 32h2v1h-2zM9 32h1v1h-1zM11 32h4v1h-4zM17 32h1v1h-1zM20 32h3v1h-3zM26 32h1v1h-1zM30 32h1v1h-1zM32 32h7v1h-7zM8 33h2v1h-2zM12 33h1v1h-1zM14 33h3v1h-3zM18 33h1v1h-1zM20 33h6v1h-6zM27 33h1v1h-1zM31 33h2v1h-2zM36 33h1v1h-1zM38 33h1v1h-1zM40 33h1v1h-1zM0 34h7v1h-7zM10 34h2v1h-2zM13 34h1v1h-1zM19 34h3v1h-3zM23 34h2v1h-2zM29 34h2v1h-2zM32 34h1v1h-1zM34 34h1v1h-1zM36 34h2v1h-2zM39 34h2v1h-2zM0 35h1v1h-1zM6 35h1v1h-1zM8 35h1v1h-1zM10 35h1v1h-1zM12 35h1v1h-1zM15 35h1v1h-1zM17 35h6v1h-6zM25 35h3v1h-3zM31 35h2v1h-2zM36 35h2v1h-2zM39 35h2v1h-2zM0 36h1v1h-1zM2 36h3v1h-3zM6 36h1v1h-1zM8 36h2v1h-2zM12 36h1v1h-1zM16 36h1v1h-1zM18 36h1v1h-1zM25 36h4v1h-4zM32 36h6v1h-6zM0 37h1v1h-1zM2 37h3v1h-3zM6 37h1v1h-1zM8 37h2v1h-2zM11 37h1v1h-1zM14 37h1v1h-1zM16 37h3v1h-3zM20 37h3v1h-3zM25 37h1v1h-1zM28 37h1v1h-1zM33 37h2v1h-2zM37 37h1v1h-1zM0 38h1v1h-1zM2 38h3v1h-3zM6 38h1v1h-1zM9 38h1v1h-1zM12 38h1v1h-1zM14 38h2v1h-2zM18 38h3v1h-3zM24 38h2v1h-2zM27 38h2v1h-2zM32 38h1v1h-1zM34 38h1v1h-1zM36 38h3v1h-3zM0 39h1v1h-1zM6 39h1v1h-1zM8 39h1v1h-1zM10 39h2v1h-2zM14 39h1v1h-1zM16 39h1v1h-1zM18 39h1v1h-1zM26 39h3v1h-3zM30 39h3v1h-3zM34 39h2v1h-2zM38 39h2v1h-2zM0 40h7v1h-7zM8 40h2v1h-2zM11 40h4v1h-4zM17 40h1v1h-1zM19 40h1v1h-1zM21 40h2v1h-2zM24 40h1v1h-1zM26 40h1v1h-1zM28 40h5v1h-5zM34 40h1v1h-1zM39 40h1v1h-1z"/></g><rect x="25" y="24" width="18" height="15" rx="1.500" fill="#8cc63f"/><text x="34" y="34" font-family="Liberation Sans, Noto Sans CJK SC, sans-serif" font-size="7.500" font-weight="700" fill="#fff" text-anchor="middle">闪电</text></svg>
<span class="abs" style="left:920.500px;top:714px;line-height:36px;font-size:31px;font-weight:700;color:#4a4a4c;white-space:nowrap;font-family:'Liberation Serif',serif;transform:scaleX(0.860);transform-origin:0 50%">VX</span><span class="abs" style="left:956.500px;top:713px;line-height:36px;font-size:27.300px;font-weight:900;letter-spacing:1.500px;color:#4a4a4c;white-space:nowrap;font-family:'Liberation Serif','Noto Serif CJK SC',serif;transform:scaleY(0.870);transform-origin:0 82%">公众号</span><span class="abs" style="left:921.500px;top:740.300px;line-height:36px;font-size:29.500px;font-weight:400;color:#4a4a4c;white-space:nowrap;letter-spacing:2.800px;font-family:'Noto Sans CJK SC','Liberation Sans',sans-serif">cn88531</span>

</body>
</html>
